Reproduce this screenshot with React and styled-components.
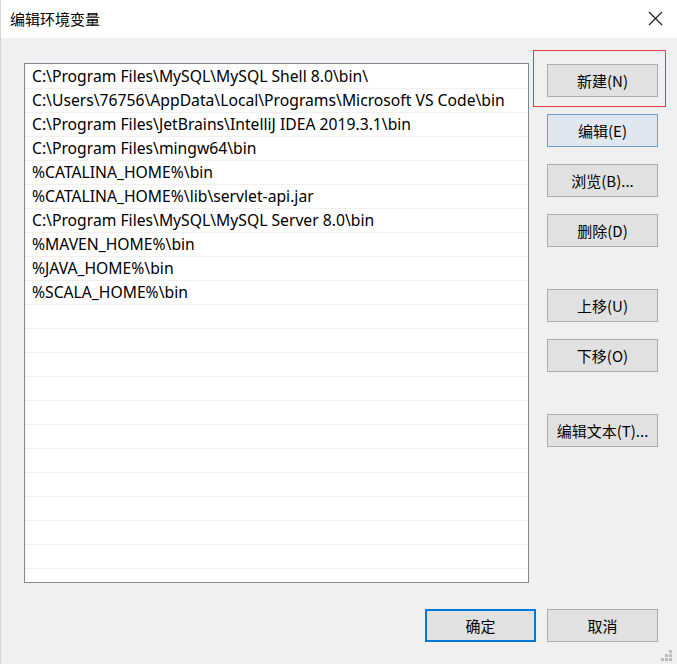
import React from 'react';
import styled, { createGlobalStyle } from 'styled-components';

const GlobalStyle = createGlobalStyle`
  html, body {
    margin: 0;
    padding: 0;
    background: #f0f0f0;
  }
  * {
    box-sizing: border-box;
  }
`;

const Window = styled.div`
  width: 677px;
  height: 664px;
  background: #f0f0f0;
  border-left: 1px solid #d6d6d6;
  display: flex;
  flex-direction: column;
  position: relative;
  font-family: "Noto Sans", "Noto Sans CJK SC", sans-serif;
  color: #000;
  overflow: hidden;
`;

const TitleBar = styled.div`
  height: 38px;
  flex-shrink: 0;
  background: #fff;
  display: flex;
  align-items: center;
  justify-content: space-between;
  padding-left: 9px;
  padding-right: 14px;
`;

const Title = styled.div`
  font-family: "Noto Sans CJK SC", sans-serif;
  font-size: 15px;
  color: #000;
  padding-bottom: 1px;
`;

const CloseIcon = styled.svg`
  width: 15px;
  height: 15px;
  display: block;
  margin-top: -1px;
`;

const Main = styled.div`
  display: flex;
  padding: 25px 0 0 23px;
`;

const PathList = styled.div`
  width: 505px;
  height: 520px;
  padding-top: 1px;
  border: 1px solid #828790;
  background: #fff;
  overflow: hidden;
  flex-shrink: 0;
`;

const Row = styled.div`
  height: 24px;
  line-height: 23px;
  padding-left: 7px;
  border-bottom: 1px solid #f0f0f0;
  font-size: 15.7px;
  white-space: nowrap;
  color: #000;
`;

const ButtonColumn = styled.div`
  display: flex;
  flex-direction: column;
  margin-left: 18px;
  padding-top: 1px;
`;

const Button = styled.button`
  width: 111px;
  height: 33px;
  flex-shrink: 0;
  margin: 0;
  margin-top: ${p => p.$gap || 0}px;
  padding: 0;
  border: ${p => (p.$default ? '2px solid #0078d7' : p.$focused ? '1px solid #6b9dcf' : '1px solid #adadad')};
  background: ${p => (p.$focused ? '#e1e7ee' : '#e1e1e1')};
  font-family: "Noto Sans CJK SC", "Noto Sans", sans-serif;
  font-size: 15px;
  color: #000;
  position: relative;
  cursor: default;
`;

const Highlight = styled.div`
  position: absolute;
  left: -15px;
  top: -15px;
  width: 133px;
  height: 57px;
  border: 1px solid #e83a3f;
  pointer-events: none;
`;

const Footer = styled.div`
  display: flex;
  justify-content: flex-end;
  align-items: center;
  gap: 11px;
  padding: 26px 19px 0 0;
`;

const Grip = styled.svg`
  position: absolute;
  right: 4px;
  bottom: 2px;
  width: 12px;
  height: 12px;
`;

const paths = [
  String.raw`C:\Program Files\MySQL\MySQL Shell 8.0\bin\ `.trim(),
  String.raw`C:\Users\76756\AppData\Local\Programs\Microsoft VS Code\bin`,
  String.raw`C:\Program Files\JetBrains\IntelliJ IDEA 2019.3.1\bin`,
  String.raw`C:\Program Files\mingw64\bin`,
  String.raw`%CATALINA_HOME%\bin`,
  String.raw`%CATALINA_HOME%\lib\servlet-api.jar`,
  String.raw`C:\Program Files\MySQL\MySQL Server 8.0\bin`,
  String.raw`%MAVEN_HOME%\bin`,
  String.raw`%JAVA_HOME%\bin`,
  String.raw`%SCALA_HOME%\bin`,
];

const rows = [...paths, ...Array(12).fill('')];

export default function App() {
  return (
    <>
      <GlobalStyle />
      <Window>
        <TitleBar>
          <Title>编辑环境变量</Title>
          <CloseIcon viewBox="0 0 15 15">
            <path d="M1 1 L14 14 M14 1 L1 14" stroke="#1a1a1a" strokeWidth="1.1" fill="none" />
          </CloseIcon>
        </TitleBar>

        <Main>
          <PathList>
            {rows.map((text, i) => (
              <Row key={i}>{text}</Row>
            ))}
          </PathList>

          <ButtonColumn>
            <Button>
              新建(N)
              <Highlight />
            </Button>
            <Button $gap={17} $focused>编辑(E)</Button>
            <Button $gap={17}>浏览(B)...</Button>
            <Button $gap={17}>删除(D)</Button>
            <Button $gap={42}>上移(U)</Button>
            <Button $gap={17}>下移(O)</Button>
            <Button $gap={42}>编辑文本(T)...</Button>
          </ButtonColumn>
        </Main>

        <Footer>
          <Button $default>确定</Button>
          <Button>取消</Button>
        </Footer>

        <Grip viewBox="0 0 12 12">
          <rect x="8" y="0" width="3" height="3" fill="#bcbcbc" />
          <rect x="4" y="4" width="3" height="3" fill="#bcbcbc" />
          <rect x="8" y="4" width="3" height="3" fill="#bcbcbc" />
          <rect x="0" y="8" width="3" height="3" fill="#bcbcbc" />
          <rect x="4" y="8" width="3" height="3" fill="#bcbcbc" />
          <rect x="8" y="8" width="3" height="3" fill="#bcbcbc" />
        </Grip>
      </Window>
    </>
  );
}
